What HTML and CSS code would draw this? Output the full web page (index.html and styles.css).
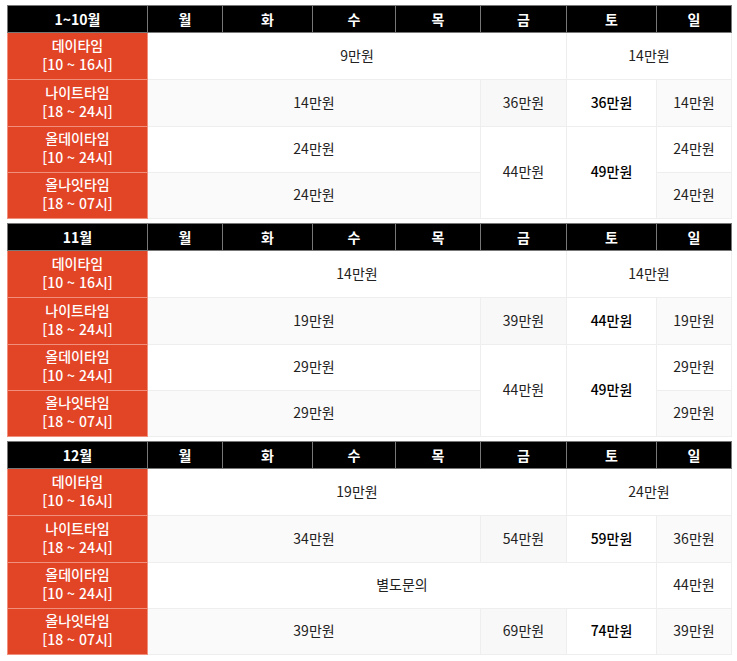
FILE: index.html
```html
<!DOCTYPE html>
<html lang="ko">
<head>
<meta charset="utf-8">
<title>요금표</title>
<link rel="stylesheet" href="styles.css">
</head>
<body>
<div class="wrap">
  <table class="price">
    <colgroup><col class="c0"><col class="c1"><col class="c2"><col class="c3"><col class="c4"><col class="c5"><col class="c6"><col class="c7"></colgroup>
    <tr class="head"><th>1~10월</th><th>월</th><th>화</th><th>수</th><th>목</th><th>금</th><th>토</th><th>일</th></tr>
    <tr class="odd"><th class="slot">데이타임<br>[10 ~ 16시]</th><td colspan="5">9만원</td><td colspan="2">14만원</td></tr>
    <tr class="even"><th class="slot">나이트타임<br>[18 ~ 24시]</th><td colspan="4">14만원</td><td class="fri">36만원</td><td class="sat">36만원</td><td>14만원</td></tr>
    <tr class="odd short"><th class="slot">올데이타임<br>[10 ~ 24시]</th><td colspan="4">24만원</td><td rowspan="2" class="span">44만원</td><td rowspan="2" class="sat">49만원</td><td>24만원</td></tr>
    <tr class="even short"><th class="slot">올나잇타임<br>[18 ~ 07시]</th><td colspan="4">24만원</td><td>24만원</td></tr>
  </table>
  <table class="price">
    <colgroup><col class="c0"><col class="c1"><col class="c2"><col class="c3"><col class="c4"><col class="c5"><col class="c6"><col class="c7"></colgroup>
    <tr class="head"><th>11월</th><th>월</th><th>화</th><th>수</th><th>목</th><th>금</th><th>토</th><th>일</th></tr>
    <tr class="odd"><th class="slot">데이타임<br>[10 ~ 16시]</th><td colspan="5">14만원</td><td colspan="2">14만원</td></tr>
    <tr class="even"><th class="slot">나이트타임<br>[18 ~ 24시]</th><td colspan="4">19만원</td><td class="fri">39만원</td><td class="sat">44만원</td><td>19만원</td></tr>
    <tr class="odd short"><th class="slot">올데이타임<br>[10 ~ 24시]</th><td colspan="4">29만원</td><td rowspan="2" class="span">44만원</td><td rowspan="2" class="sat">49만원</td><td>29만원</td></tr>
    <tr class="even short"><th class="slot">올나잇타임<br>[18 ~ 07시]</th><td colspan="4">29만원</td><td>29만원</td></tr>
  </table>
  <table class="price">
    <colgroup><col class="c0"><col class="c1"><col class="c2"><col class="c3"><col class="c4"><col class="c5"><col class="c6"><col class="c7"></colgroup>
    <tr class="head"><th>12월</th><th>월</th><th>화</th><th>수</th><th>목</th><th>금</th><th>토</th><th>일</th></tr>
    <tr class="odd"><th class="slot">데이타임<br>[10 ~ 16시]</th><td colspan="5">19만원</td><td colspan="2">24만원</td></tr>
    <tr class="even"><th class="slot">나이트타임<br>[18 ~ 24시]</th><td colspan="4">34만원</td><td class="fri">54만원</td><td class="sat">59만원</td><td>36만원</td></tr>
    <tr class="odd short"><th class="slot">올데이타임<br>[10 ~ 24시]</th><td colspan="6">별도문의</td><td>44만원</td></tr>
    <tr class="even short"><th class="slot">올나잇타임<br>[18 ~ 07시]</th><td colspan="4">39만원</td><td class="fri">69만원</td><td class="sat">74만원</td><td>39만원</td></tr>
  </table>
</div>
</body>
</html>
```

FILE: styles.css
```css
html, body {
  margin: 0;
  padding: 0;
  background: #ffffff;
}

body {
  font-family: "Noto Sans CJK KR", "Noto Sans", sans-serif;
  color: #222222;
}

.wrap {
  padding: 5px 6px 0 7px;
  display: flex;
  flex-direction: column;
  gap: 4px;
}

.price {
  width: 724px;
  border-collapse: collapse;
  table-layout: fixed;
  font-size: 14px;
}

.c0 { width: 140px; }
.c1 { width: 75px; }
.c2 { width: 90px; }
.c3 { width: 83px; }
.c4 { width: 85px; }
.c5 { width: 86px; }
.c6 { width: 90px; }
.c7 { width: 75px; }

.price th,
.price td {
  padding: 0 0 3px;
  text-align: center;
  vertical-align: middle;
  border: 1px solid #eeeeee;
  font-weight: 400;
}

.head {
  height: 27px;
}

.head th {
  padding: 0;
  background: #000000;
  color: #ffffff;
  font-weight: 700;
  border: 1px solid #777777;
  line-height: 18px;
}

.price tr.odd,
.price tr.even {
  height: 47px;
}

.price tr.short {
  height: 46px;
}

.price tr.odd td {
  background: #ffffff;
}

.price tr.even td {
  background: #fafafa;
}

.price tr.even td.fri {
  background: #f8f8f8;
}

.price td.span {
  background: #ffffff;
}

.price tr td.sat {
  background: #ffffff;
  color: #000000;
  font-weight: 500;
}

.price th.slot {
  background: #e24426;
  color: #ffffff;
  font-weight: 500;
  line-height: 19px;
  border-color: #ef8f7c;
}
```
